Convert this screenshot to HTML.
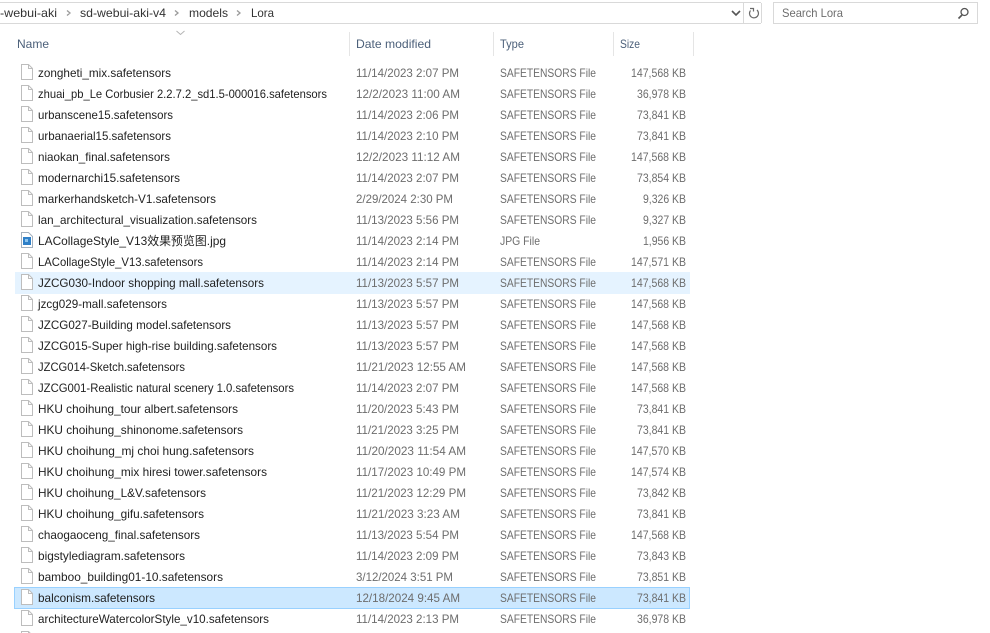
<!DOCTYPE html>
<html><head><meta charset="utf-8"><style>
html,body{margin:0;padding:0;background:#fff;width:990px;height:633px;overflow:hidden}
svg{display:block;font-family:"Liberation Sans","Noto Sans CJK SC",sans-serif;font-size:12px}
.n{fill:#222}.d{fill:#6d6d6d}.h{fill:#4c607a}.b{fill:#333}
</style></head><body>
<svg width="990" height="633" viewBox="0 0 990 633" xmlns="http://www.w3.org/2000/svg">
<defs>
<g id="f"><path d="M21.5 64.500H28.500L32.500 68.500V79.500H21.500Z" fill="#fff" stroke="#bdbdbd"/><path d="M28.500 64.500V68.500H32.500" fill="none" stroke="#bdbdbd"/></g>
</defs>
<path d="M0 2.500H761M0 23.500H761M743.500 3V23M761.500 3V23" stroke="#d9d9d9" fill="none"/>
<rect x="773.500" y="2.500" width="204" height="21" fill="#fff" stroke="#d9d9d9"/>
<text class="b" x="0" y="17" textLength="57" lengthAdjust="spacingAndGlyphs">-webui-aki</text>
<text class="b" x="80" y="17" textLength="86" lengthAdjust="spacingAndGlyphs">sd-webui-aki-v4</text>
<text class="b" x="189" y="17" textLength="39" lengthAdjust="spacingAndGlyphs">models</text>
<text class="b" x="251" y="17" textLength="23" lengthAdjust="spacingAndGlyphs">Lora</text>
<path d="M67 10.500L70 13L67 15.500M175 10.500L178 13L175 15.500M237 10.500L240 13L237 15.500" fill="none" stroke="#9a9a9a" stroke-width="1.300"/>
<path d="M732 11L736 15L740 11" fill="none" stroke="#555" stroke-width="1.600"/>
<path d="M757 10A4.500 4.500 0 1 1 750.500 10.500M750 8.500H753.500V11.500" fill="none" stroke="#6a6a6a" stroke-width="1.200"/>
<text x="782" y="17" fill="#6d6d6d" textLength="61" lengthAdjust="spacingAndGlyphs">Search Lora</text>
<circle cx="964.500" cy="12" r="3.500" fill="none" stroke="#555" stroke-width="1.300"/><path d="M962 15L958.500 18.500" stroke="#555" stroke-width="1.600"/>
<path d="M176.500 31L180.500 34.500L184.500 31" fill="none" stroke="#b5b5b5"/>
<path d="M349.500 32V56M493.500 32V56M613.500 32V56M693.500 32V56" stroke="#e5e5e5"/>
<text class="h" x="17" y="48" textLength="32" lengthAdjust="spacingAndGlyphs">Name</text>
<text class="h" x="356" y="48" textLength="75" lengthAdjust="spacingAndGlyphs">Date modified</text>
<text class="h" x="500" y="48" textLength="24" lengthAdjust="spacingAndGlyphs">Type</text>
<text class="h" x="620" y="48" textLength="20" lengthAdjust="spacingAndGlyphs">Size</text>
<rect x="15" y="272" width="675" height="22" fill="#e5f3ff"/>
<rect x="14.500" y="587.500" width="675" height="21" fill="#cce8ff" stroke="#99d1ff"/>
<use href="#f" y="0"/><use href="#f" y="21"/><use href="#f" y="42"/><use href="#f" y="63"/><use href="#f" y="84"/><use href="#f" y="105"/><use href="#f" y="126"/><use href="#f" y="147"/>
<path d="M21.500 232.500H28.500L32.500 236.500V247.500H21.500Z" fill="#fff" stroke="#a4b0bd"/><rect x="23" y="237" width="8" height="8" fill="#2f80c8"/><rect x="25" y="239" width="3" height="3" fill="#8cc4ee"/>
<use href="#f" y="189"/><use href="#f" y="210"/><use href="#f" y="231"/><use href="#f" y="252"/><use href="#f" y="273"/><use href="#f" y="294"/><use href="#f" y="315"/><use href="#f" y="336"/><use href="#f" y="357"/><use href="#f" y="378"/><use href="#f" y="399"/><use href="#f" y="420"/><use href="#f" y="441"/><use href="#f" y="462"/><use href="#f" y="483"/><use href="#f" y="504"/><use href="#f" y="525"/><use href="#f" y="546"/><use href="#f" y="567"/>

<g class="n">
<text x="38" y="77" textLength="133" lengthAdjust="spacingAndGlyphs">zongheti_mix.safetensors</text>
<text x="38" y="98" textLength="289" lengthAdjust="spacingAndGlyphs">zhuai_pb_Le Corbusier 2.2.7.2_sd1.5-000016.safetensors</text>
<text x="38" y="119" textLength="135" lengthAdjust="spacingAndGlyphs">urbanscene15.safetensors</text>
<text x="38" y="140" textLength="133" lengthAdjust="spacingAndGlyphs">urbanaerial15.safetensors</text>
<text x="38" y="161" textLength="132" lengthAdjust="spacingAndGlyphs">niaokan_final.safetensors</text>
<text x="38" y="182" textLength="142" lengthAdjust="spacingAndGlyphs">modernarchi15.safetensors</text>
<text x="38" y="203" textLength="178" lengthAdjust="spacingAndGlyphs">markerhandsketch-V1.safetensors</text>
<text x="38" y="224" textLength="219" lengthAdjust="spacingAndGlyphs">lan_architectural_visualization.safetensors</text>
<text x="38" y="245" textLength="188" lengthAdjust="spacingAndGlyphs">LACollageStyle_V13效果预览图.jpg</text>
<text x="38" y="266" textLength="165" lengthAdjust="spacingAndGlyphs">LACollageStyle_V13.safetensors</text>
<text x="38" y="287" textLength="226" lengthAdjust="spacingAndGlyphs">JZCG030-Indoor shopping mall.safetensors</text>
<text x="38" y="308" textLength="129" lengthAdjust="spacingAndGlyphs">jzcg029-mall.safetensors</text>
<text x="38" y="329" textLength="193" lengthAdjust="spacingAndGlyphs">JZCG027-Building model.safetensors</text>
<text x="38" y="350" textLength="239" lengthAdjust="spacingAndGlyphs">JZCG015-Super high-rise building.safetensors</text>
<text x="38" y="371" textLength="147" lengthAdjust="spacingAndGlyphs">JZCG014-Sketch.safetensors</text>
<text x="38" y="392" textLength="256" lengthAdjust="spacingAndGlyphs">JZCG001-Realistic natural scenery 1.0.safetensors</text>
<text x="38" y="413" textLength="200" lengthAdjust="spacingAndGlyphs">HKU choihung_tour albert.safetensors</text>
<text x="38" y="434" textLength="205" lengthAdjust="spacingAndGlyphs">HKU choihung_shinonome.safetensors</text>
<text x="38" y="455" textLength="216" lengthAdjust="spacingAndGlyphs">HKU choihung_mj choi hung.safetensors</text>
<text x="38" y="476" textLength="229" lengthAdjust="spacingAndGlyphs">HKU choihung_mix hiresi tower.safetensors</text>
<text x="38" y="497" textLength="168" lengthAdjust="spacingAndGlyphs">HKU choihung_L&amp;V.safetensors</text>
<text x="38" y="518" textLength="166" lengthAdjust="spacingAndGlyphs">HKU choihung_gifu.safetensors</text>
<text x="38" y="539" textLength="162" lengthAdjust="spacingAndGlyphs">chaogaoceng_final.safetensors</text>
<text x="38" y="560" textLength="147" lengthAdjust="spacingAndGlyphs">bigstylediagram.safetensors</text>
<text x="38" y="581" textLength="185" lengthAdjust="spacingAndGlyphs">bamboo_building01-10.safetensors</text>
<text x="38" y="602" textLength="117" lengthAdjust="spacingAndGlyphs">balconism.safetensors</text>
<text x="38" y="623" textLength="231" lengthAdjust="spacingAndGlyphs">architectureWatercolorStyle_v10.safetensors</text>
</g>

<g class="d">
<text x="356" y="77" textLength="103" lengthAdjust="spacingAndGlyphs">11/14/2023 2:07 PM</text>
<text x="356" y="98" textLength="104" lengthAdjust="spacingAndGlyphs">12/2/2023 11:00 AM</text>
<text x="356" y="119" textLength="103" lengthAdjust="spacingAndGlyphs">11/14/2023 2:06 PM</text>
<text x="356" y="140" textLength="103" lengthAdjust="spacingAndGlyphs">11/14/2023 2:10 PM</text>
<text x="356" y="161" textLength="104" lengthAdjust="spacingAndGlyphs">12/2/2023 11:12 AM</text>
<text x="356" y="182" textLength="103" lengthAdjust="spacingAndGlyphs">11/14/2023 2:07 PM</text>
<text x="356" y="203" textLength="97" lengthAdjust="spacingAndGlyphs">2/29/2024 2:30 PM</text>
<text x="356" y="224" textLength="103" lengthAdjust="spacingAndGlyphs">11/13/2023 5:56 PM</text>
<text x="356" y="245" textLength="103" lengthAdjust="spacingAndGlyphs">11/14/2023 2:14 PM</text>
<text x="356" y="266" textLength="103" lengthAdjust="spacingAndGlyphs">11/14/2023 2:14 PM</text>
<text x="356" y="287" textLength="103" lengthAdjust="spacingAndGlyphs">11/13/2023 5:57 PM</text>
<text x="356" y="308" textLength="103" lengthAdjust="spacingAndGlyphs">11/13/2023 5:57 PM</text>
<text x="356" y="329" textLength="103" lengthAdjust="spacingAndGlyphs">11/13/2023 5:57 PM</text>
<text x="356" y="350" textLength="103" lengthAdjust="spacingAndGlyphs">11/13/2023 5:57 PM</text>
<text x="356" y="371" textLength="110" lengthAdjust="spacingAndGlyphs">11/21/2023 12:55 AM</text>
<text x="356" y="392" textLength="103" lengthAdjust="spacingAndGlyphs">11/14/2023 2:07 PM</text>
<text x="356" y="413" textLength="103" lengthAdjust="spacingAndGlyphs">11/20/2023 5:43 PM</text>
<text x="356" y="434" textLength="103" lengthAdjust="spacingAndGlyphs">11/21/2023 3:25 PM</text>
<text x="356" y="455" textLength="110" lengthAdjust="spacingAndGlyphs">11/20/2023 11:54 AM</text>
<text x="356" y="476" textLength="110" lengthAdjust="spacingAndGlyphs">11/17/2023 10:49 PM</text>
<text x="356" y="497" textLength="110" lengthAdjust="spacingAndGlyphs">11/21/2023 12:29 PM</text>
<text x="356" y="518" textLength="104" lengthAdjust="spacingAndGlyphs">11/21/2023 3:23 AM</text>
<text x="356" y="539" textLength="103" lengthAdjust="spacingAndGlyphs">11/13/2023 5:54 PM</text>
<text x="356" y="560" textLength="103" lengthAdjust="spacingAndGlyphs">11/14/2023 2:09 PM</text>
<text x="356" y="581" textLength="97" lengthAdjust="spacingAndGlyphs">3/12/2024 3:51 PM</text>
<text x="356" y="602" textLength="104" lengthAdjust="spacingAndGlyphs">12/18/2024 9:45 AM</text>
<text x="356" y="623" textLength="103" lengthAdjust="spacingAndGlyphs">11/14/2023 2:13 PM</text>
</g>

<g class="d">
<text x="500" y="77" textLength="96" lengthAdjust="spacingAndGlyphs">SAFETENSORS File</text>
<text x="500" y="98" textLength="96" lengthAdjust="spacingAndGlyphs">SAFETENSORS File</text>
<text x="500" y="119" textLength="96" lengthAdjust="spacingAndGlyphs">SAFETENSORS File</text>
<text x="500" y="140" textLength="96" lengthAdjust="spacingAndGlyphs">SAFETENSORS File</text>
<text x="500" y="161" textLength="96" lengthAdjust="spacingAndGlyphs">SAFETENSORS File</text>
<text x="500" y="182" textLength="96" lengthAdjust="spacingAndGlyphs">SAFETENSORS File</text>
<text x="500" y="203" textLength="96" lengthAdjust="spacingAndGlyphs">SAFETENSORS File</text>
<text x="500" y="224" textLength="96" lengthAdjust="spacingAndGlyphs">SAFETENSORS File</text>
<text x="500" y="245" textLength="40" lengthAdjust="spacingAndGlyphs">JPG File</text>
<text x="500" y="266" textLength="96" lengthAdjust="spacingAndGlyphs">SAFETENSORS File</text>
<text x="500" y="287" textLength="96" lengthAdjust="spacingAndGlyphs">SAFETENSORS File</text>
<text x="500" y="308" textLength="96" lengthAdjust="spacingAndGlyphs">SAFETENSORS File</text>
<text x="500" y="329" textLength="96" lengthAdjust="spacingAndGlyphs">SAFETENSORS File</text>
<text x="500" y="350" textLength="96" lengthAdjust="spacingAndGlyphs">SAFETENSORS File</text>
<text x="500" y="371" textLength="96" lengthAdjust="spacingAndGlyphs">SAFETENSORS File</text>
<text x="500" y="392" textLength="96" lengthAdjust="spacingAndGlyphs">SAFETENSORS File</text>
<text x="500" y="413" textLength="96" lengthAdjust="spacingAndGlyphs">SAFETENSORS File</text>
<text x="500" y="434" textLength="96" lengthAdjust="spacingAndGlyphs">SAFETENSORS File</text>
<text x="500" y="455" textLength="96" lengthAdjust="spacingAndGlyphs">SAFETENSORS File</text>
<text x="500" y="476" textLength="96" lengthAdjust="spacingAndGlyphs">SAFETENSORS File</text>
<text x="500" y="497" textLength="96" lengthAdjust="spacingAndGlyphs">SAFETENSORS File</text>
<text x="500" y="518" textLength="96" lengthAdjust="spacingAndGlyphs">SAFETENSORS File</text>
<text x="500" y="539" textLength="96" lengthAdjust="spacingAndGlyphs">SAFETENSORS File</text>
<text x="500" y="560" textLength="96" lengthAdjust="spacingAndGlyphs">SAFETENSORS File</text>
<text x="500" y="581" textLength="96" lengthAdjust="spacingAndGlyphs">SAFETENSORS File</text>
<text x="500" y="602" textLength="96" lengthAdjust="spacingAndGlyphs">SAFETENSORS File</text>
<text x="500" y="623" textLength="96" lengthAdjust="spacingAndGlyphs">SAFETENSORS File</text>
</g>

<g class="d">
<text x="631" y="77" textLength="55" lengthAdjust="spacingAndGlyphs">147,568 KB</text>
<text x="637" y="98" textLength="49" lengthAdjust="spacingAndGlyphs">36,978 KB</text>
<text x="637" y="119" textLength="49" lengthAdjust="spacingAndGlyphs">73,841 KB</text>
<text x="637" y="140" textLength="49" lengthAdjust="spacingAndGlyphs">73,841 KB</text>
<text x="631" y="161" textLength="55" lengthAdjust="spacingAndGlyphs">147,568 KB</text>
<text x="637" y="182" textLength="49" lengthAdjust="spacingAndGlyphs">73,854 KB</text>
<text x="643" y="203" textLength="43" lengthAdjust="spacingAndGlyphs">9,326 KB</text>
<text x="643" y="224" textLength="43" lengthAdjust="spacingAndGlyphs">9,327 KB</text>
<text x="643" y="245" textLength="43" lengthAdjust="spacingAndGlyphs">1,956 KB</text>
<text x="631" y="266" textLength="55" lengthAdjust="spacingAndGlyphs">147,571 KB</text>
<text x="631" y="287" textLength="55" lengthAdjust="spacingAndGlyphs">147,568 KB</text>
<text x="631" y="308" textLength="55" lengthAdjust="spacingAndGlyphs">147,568 KB</text>
<text x="631" y="329" textLength="55" lengthAdjust="spacingAndGlyphs">147,568 KB</text>
<text x="631" y="350" textLength="55" lengthAdjust="spacingAndGlyphs">147,568 KB</text>
<text x="631" y="371" textLength="55" lengthAdjust="spacingAndGlyphs">147,568 KB</text>
<text x="631" y="392" textLength="55" lengthAdjust="spacingAndGlyphs">147,568 KB</text>
<text x="637" y="413" textLength="49" lengthAdjust="spacingAndGlyphs">73,841 KB</text>
<text x="637" y="434" textLength="49" lengthAdjust="spacingAndGlyphs">73,841 KB</text>
<text x="631" y="455" textLength="55" lengthAdjust="spacingAndGlyphs">147,570 KB</text>
<text x="631" y="476" textLength="55" lengthAdjust="spacingAndGlyphs">147,574 KB</text>
<text x="637" y="497" textLength="49" lengthAdjust="spacingAndGlyphs">73,842 KB</text>
<text x="637" y="518" textLength="49" lengthAdjust="spacingAndGlyphs">73,841 KB</text>
<text x="631" y="539" textLength="55" lengthAdjust="spacingAndGlyphs">147,568 KB</text>
<text x="637" y="560" textLength="49" lengthAdjust="spacingAndGlyphs">73,843 KB</text>
<text x="637" y="581" textLength="49" lengthAdjust="spacingAndGlyphs">73,851 KB</text>
<text x="637" y="602" textLength="49" lengthAdjust="spacingAndGlyphs">73,841 KB</text>
<text x="637" y="623" textLength="49" lengthAdjust="spacingAndGlyphs">36,978 KB</text>
</g>
</svg>
</body></html>
